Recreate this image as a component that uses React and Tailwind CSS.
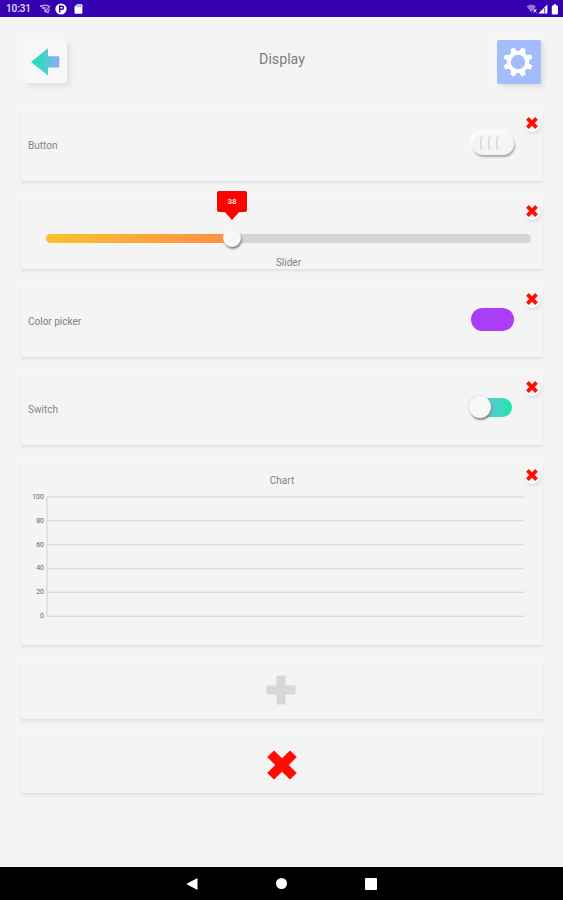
import React, { useState } from "react";
import clsx from "clsx";

const ticks = [100, 80, 60, 40, 20, 0];

function CrossIcon({ className }) {
  return (
    <svg
      viewBox="0 0 30 30"
      className={className}
      fill="#ff0b00"
      stroke="#ff0b00"
      strokeLinejoin="round"
    >
      <path d="M7 0.9 L15 8.7 L23 0.9 L29.3 7 L21.3 15 L29.3 23 L23 29.1 L15 21.3 L7 29.1 L0.7 23 L8.7 15 L0.7 7 Z" />
    </svg>
  );
}

function StatusBar() {
  return (
    <header className="flex h-[17px] items-center justify-between bg-[#3500b1] pt-[1px] pr-[4px] pl-[6px] text-white">
      <div className="flex items-center">
        <span className="w-[33px] text-[10px] leading-none font-medium tracking-[-0.1px] text-[#e8e0fa]">
          10:31
        </span>
        {/* No-signal glyph */}
        <svg width="12" height="10" viewBox="0 0 12 10" className="opacity-60">
          <path
            d="M1 2.8 Q5.5 -0.2 10.5 2.6 L7.5 6 M3 4.6 Q5 3 7.2 4 M5 6.8 L9 8.6 L10.5 5 M1.5 1 L9 8.6"
            fill="none"
            stroke="white"
            strokeWidth="1.3"
          />
        </svg>
        <svg width="12" height="12" viewBox="0 0 12 12" className="ml-[4px]">
          <circle cx="6" cy="6" r="5.6" fill="white" />
          <path
            d="M4.7 9.5 V3.2 H7 A1.5 1.5 0 0 1 7 6.2 H5"
            fill="none"
            stroke="#3500b1"
            strokeWidth="1.4"
          />
        </svg>
        <svg width="9" height="10" viewBox="0 0 9 10" className="ml-[7px]">
          <path
            d="M3 0.3 H7.4 Q8.4 0.3 8.4 1.3 V8.7 Q8.4 9.7 7.4 9.7 H1.5 Q0.5 9.7 0.5 8.7 V2.8 Z"
            fill="white"
          />
          <path d="M3.2 1.3 V3 M4.9 1.3 V3 M6.6 1.3 V3" stroke="#3500b1" strokeWidth="0.6" />
        </svg>
      </div>
      <div className="flex items-center">
        <svg width="11" height="10" viewBox="0 0 11 10">
          <path d="M0.5 2.3 Q5.5 -1.5 10 2.3 L5.5 8.5 Z" fill="white" opacity="0.45" />
          <path d="M7.6 5 L10.4 8.4 M10.4 5 L7.6 8.4" stroke="white" strokeWidth="1" />
        </svg>
        <svg width="10" height="10" viewBox="0 0 10 10" className="ml-[1px]">
          <path d="M0.3 9.6 L9.4 0.4 V9.6 Z" fill="white" />
          <path d="M6.7 4 V9.2" stroke="#3500b1" strokeWidth="0.8" />
        </svg>
        <svg width="8" height="11" viewBox="0 0 8 11" className="ml-[3px]">
          <path
            d="M2.6 0.3 H5.2 V1.4 H6 Q7 1.4 7 2.4 V9.6 Q7 10.6 6 10.6 H1.8 Q0.8 10.6 0.8 9.6 V2.4 Q0.8 1.4 1.8 1.4 H2.6 Z"
            fill="white"
          />
        </svg>
      </div>
    </header>
  );
}

function Card({ className, onRemove, children }) {
  return (
    <section
      className={clsx(
        "relative rounded-[1px] bg-[#f4f4f4] shadow-[0px_2px_3px_#e0e0e0,0px_-4px_5px_#f6f6f6]",
        className
      )}
    >
      {children}
      {onRemove && (
        <button
          aria-label="Remove"
          onClick={onRemove}
          className="absolute top-[6px] right-[2px] flex size-[17px] items-center justify-center rounded-full bg-[#f6f6f6] shadow-[1px_2px_3px_#dcdcdc]"
        >
          <CrossIcon className="mr-[1px] mb-[1px] size-[12px]" />
        </button>
      )}
    </section>
  );
}

function Label({ children }) {
  return <span className="text-[10px] leading-[12px] text-[#828282]">{children}</span>;
}

function Chart() {
  return (
    <div className="flex h-full flex-col">
      <div className="flex h-[26px] items-end justify-center">
        <Label>Chart</Label>
      </div>
      <div className="mt-[5px] flex pr-[19px]">
        <div className="flex w-[23px] flex-col text-right text-[7px] text-[#666666]">
          {ticks.map((tick) => (
            <span key={tick} className="h-[23.8px] leading-[10px]">
              {tick}
            </span>
          ))}
        </div>
        <svg
          width="478"
          height="126"
          viewBox="0 0 478 126"
          className="ml-[2px]"
          stroke="#dddddd"
          strokeWidth="1.5"
        >
          <path d="M1 5 V124.3" />
          {ticks.map((tick, i) => (
            <line key={tick} x1="1" x2="478" y1={4.9 + i * 23.85} y2={4.9 + i * 23.85} />
          ))}
        </svg>
      </div>
    </div>
  );
}

function App() {
  const [widgets, setWidgets] = useState(["button", "slider", "color", "switch", "chart"]);

  const remove = (name) => setWidgets(widgets.filter((w) => w !== name));

  return (
    <div className="flex h-[900px] w-[563px] flex-col overflow-hidden bg-[#f4f4f4] font-[Roboto,sans-serif]">
      <StatusBar />

      <div className="flex h-[92px] items-start justify-between pt-[23px] pr-[22px] pl-[24px]">
        <button
          aria-label="Back"
          className="flex size-[43px] items-center justify-center rounded-[3px] bg-[#f7f7f7] shadow-[3px_3px_5px_#dedede,-3px_-3px_6px_#f8f8f8]"
        >
          <svg width="29" height="28" viewBox="0 0 29 28">
            <defs>
              <linearGradient id="arrow" x1="0" x2="1" y1="0" y2="0">
                <stop offset="0" stopColor="#19e3b1" />
                <stop offset="0.5" stopColor="#4bcdd0" />
                <stop offset="1" stopColor="#94a9f6" />
              </linearGradient>
            </defs>
            <path d="M0 14 L17 0.3 V8.2 H28.3 V19.6 H17 V27.6 Z" fill="url(#arrow)" />
          </svg>
        </button>
        <h1 className="mt-[11px] text-[14.2px] leading-[17px] text-[#7c7c7c]">Display</h1>
        <button
          aria-label="Settings"
          className="flex size-[44px] items-center justify-center rounded-[2px] bg-[#a3bcfc] shadow-[3px_3px_5px_#dedede,-3px_-3px_6px_#f8f8f8]"
        >
          <svg width="30" height="30" viewBox="-15 -15 30 30" className="mr-[1px]">
            <circle r="9.2" fill="none" stroke="white" strokeWidth="4" />
            <g fill="white">
              {[22.5, 67.5, 112.5, 157.5, 202.5, 247.5, 292.5, 337.5].map((angle) => (
                <path
                  key={angle}
                  d="M-3 -10 L-2.1 -14.8 H2.1 L3 -10 Z"
                  transform={`rotate(${angle})`}
                />
              ))}
            </g>
          </svg>
        </button>
      </div>

      <main className="flex flex-1 flex-col gap-4 pr-[20px] pl-[21px]">
        {widgets.includes("button") && (
          <Card className="h-[72px]" onRemove={() => remove("button")}>
            <div className="flex h-full items-center justify-between pt-[2px] pr-[29px] pl-[7px]">
              <Label>Button</Label>
              <div className="mb-[5px] flex h-[22px] w-[42px] justify-start gap-[5px] rounded-full bg-[#f5f5f5] pt-[3px] pl-[8px] shadow-[1px_2px_2px_#aaaaaa,-2px_-2px_3px_#ffffff]">
                <span className="h-[14px] w-[3px] rounded-tl-full border-t border-l-2 border-[#dedede]" />
                <span className="h-[14px] w-[3px] rounded-tl-full border-t border-l-2 border-[#dedede]" />
                <span className="h-[14px] w-[3px] rounded-tl-full border-t border-l-2 border-[#dedede]" />
              </div>
            </div>
          </Card>
        )}

        {widgets.includes("slider") && (
          <Card className="h-[72px]" onRemove={() => remove("slider")}>
            <div className="flex h-full flex-col pt-[37px] pr-[12px] pl-[25px]">
              <div className="relative h-[8.5px] rounded-full bg-[#d5d5d5]">
                <div className="h-full w-[186px] rounded-full bg-linear-to-r from-[#fac22b] to-[#ff8c45]" />
                <span className="absolute -top-[5px] left-[177px] size-[18px] rounded-full bg-[#f7f7f7] shadow-[1px_2px_2px_#888888]" />
                {/* Value bubble above the thumb */}
                <div className="absolute -top-[43px] left-[171px] flex w-[30px] flex-col items-center">
                  <span className="h-[21px] w-full rounded-[2px] bg-[#ff0000] text-center text-[8px] leading-[21px] font-bold text-[#ffdddd]">
                    38
                  </span>
                  <svg width="16" height="9" viewBox="0 0 16 9" className="-mt-px">
                    <path d="M0 0 H16 L8 9 Z" fill="#ff0000" />
                  </svg>
                </div>
              </div>
              <div className="mt-[14.5px] flex justify-center">
                <Label>Slider</Label>
              </div>
            </div>
          </Card>
        )}

        {widgets.includes("color") && (
          <Card className="h-[72px]" onRemove={() => remove("color")}>
            <div className="flex h-full items-center justify-between pt-[2px] pr-[29px] pl-[7px]">
              <Label>Color picker</Label>
              <span className="mb-[5px] h-[23px] w-[43px] rounded-full bg-[#ac3df7]" />
            </div>
          </Card>
        )}

        {widgets.includes("switch") && (
          <Card className="h-[72px]" onRemove={() => remove("switch")}>
            <div className="flex h-full items-center justify-between pt-[2px] pr-[31px] pl-[7px]">
              <Label>Switch</Label>
              <div className="relative mb-[5px] h-[19px] w-[37px] rounded-full bg-linear-to-r from-[#68bfe0] via-[#45d3c9] via-60% to-[#0ce7a6]">
                <span className="absolute -top-[2px] -left-[6px] size-[22px] rounded-full bg-[#f8f8f8] shadow-[1px_2px_2px_#888888,-1px_-1px_1px_#e6e6e6]" />
              </div>
            </div>
          </Card>
        )}

        {widgets.includes("chart") && (
          <Card className="h-[184px]" onRemove={() => remove("chart")}>
            <Chart />
          </Card>
        )}

        <Card className="h-[58px]">
          <button aria-label="Add" className="flex h-full w-full items-center justify-center">
            <svg width="30" height="30" viewBox="0 0 30 30" className="mr-[2px]">
              <path
                d="M10.5 0.5 H19.5 V10.5 H29.5 V19.5 H19.5 V29.5 H10.5 V19.5 H0.5 V10.5 H10.5 Z"
                fill="#d7d7d7"
              />
            </svg>
          </button>
        </Card>

        <Card className="h-[58px]">
          <button aria-label="Delete" className="flex h-full w-full items-center justify-center">
            <CrossIcon className="mt-[2px] mr-[1px] size-[30px]" />
          </button>
        </Card>
      </main>

      <nav className="flex h-[33px] items-center justify-center gap-[78px] bg-black">
        <svg width="12" height="12" viewBox="0 0 12 12" fill="white">
          <path d="M0.3 6 L11.5 0 V12 Z" />
        </svg>
        <span className="size-[11px] rounded-full bg-white" />
        <span className="size-[12px] rounded-[1px] bg-white" />
      </nav>
    </div>
  );
}

export default App;
